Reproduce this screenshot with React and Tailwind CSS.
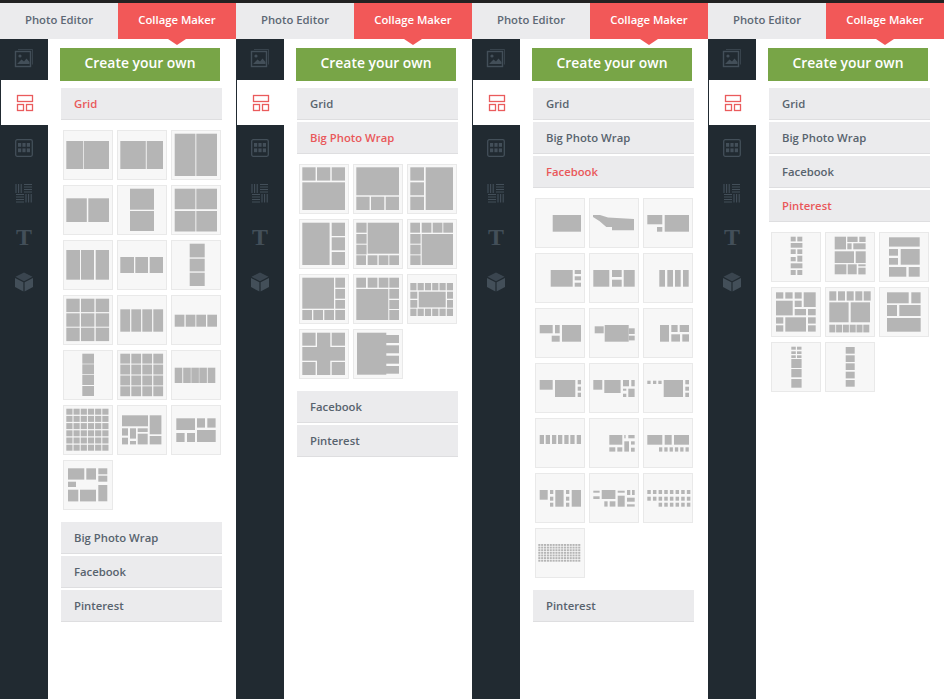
import React from 'react';

const range = (n) => Array.from({ length: n }, (_, i) => i);
const cells = (xs, ys, w, h) => ys.flatMap((y) => xs.map((x) => [x, y, w, h]));

// each layout is a list of [x, y, w, h] tiles in a 50x50 box, a string is a polygon
const gridLayouts = [
  [[3.3, 11, 17, 28], [21, 11, 25, 28]],
  [[3.3, 11, 25.5, 28], [29.7, 11, 16.3, 28]],
  [[3.7, 3.7, 20.7, 42.3], [25.3, 3.7, 20.7, 42.3]],
  [[3.3, 13.3, 20.5, 23.7], [25.3, 13.3, 20.7, 23.7]],
  [[13, 3.7, 24, 21], [13, 26, 24, 20]],
  cells([3.7, 25.3], [3.7, 26], 20.7, 20.5),
  [[3.3, 10, 13.7, 29.7], [18, 10, 13, 29.7], [32.7, 10, 13.3, 29.7]],
  [[3.3, 17, 13.7, 16], [18.3, 17, 12.7, 16], [32.7, 17, 13.3, 16]],
  [[18.7, 3.7, 15, 13.7], [18.7, 18.7, 15, 12.7], [18.7, 32.7, 15, 13.3]],
  cells([3.3, 18, 32.7], [3.7, 18.3, 32.7], 13.4, 13.4),
  cells([3.3, 14.3, 25.3, 36.3], [14.3], 9.8, 22.4),
  cells([3.7, 14.7, 25.3, 36.3], [19.7], 9.7, 12),
  cells([19.3], [3.7, 14.3, 25, 36], 11.7, 10),
  cells([3.3, 14.3, 25.3, 36.3], [3.7, 14.6, 25.5, 36.3], 9.8, 9.9),
  cells([3.7, 12.2, 20.3, 28.3, 36.7], [17.7], 7.6, 15.3),
  cells(range(6).map((i) => 3.3 + i * 7.2), range(6).map((i) => 3.7 + i * 7.2), 6.2, 6),
  [[5, 10.3, 26, 11], [32.7, 10.3, 11.7, 19], [5, 23.3, 6, 7.3], [13, 23.3, 6, 10.3], [20.7, 23.3, 10, 3.7], [20.7, 28.7, 10, 10.7], [32.7, 31, 11.7, 8.4], [5, 32.7, 6, 6.7], [13, 36, 6, 3.4]],
  [[5.3, 13.3, 18.7, 11.7], [26, 13.3, 8, 9.3], [36.3, 13.3, 8.3, 9.3], [5.3, 28, 8.3, 9], [16, 28, 8, 9], [26, 25, 18.7, 12]],
  [[5, 8.3, 16.3, 11.3], [23.3, 8.3, 9.7, 11.3], [35.3, 8.3, 9, 6], [35.3, 15.7, 9, 6], [5, 21.7, 8, 5.3], [5, 29.7, 10.3, 11.7], [17, 29.7, 16, 11.7], [35.3, 25, 9, 16.3]],
];

const bigPhotoLayouts = [
  [[3.3, 3.3, 13.3, 13.3], [18, 3.3, 13.3, 13.3], [32.7, 3.3, 13.3, 13.3], [3.3, 18.3, 42.7, 27.7]],
  [[3.3, 3.3, 42.7, 28], [3.3, 32.7, 13.3, 13.3], [18, 32.7, 13.3, 13.3], [32.7, 32.7, 13.3, 13.3]],
  [[3.3, 3.3, 13.7, 13.3], [3.3, 18.3, 13.7, 13], [3.3, 32.7, 13.7, 13.3], [18.7, 3.3, 27.3, 42.7]],
  [[3.3, 3.7, 27.3, 42.3], [32.7, 3.7, 13.3, 13.3], [32.7, 18.3, 13.3, 13], [32.7, 33, 13.3, 13]],
  [[3.3, 3.7, 10.3, 10], [3.3, 15, 10.3, 9.7], [3.3, 25.7, 10.3, 9.7], [14.7, 3.7, 31.3, 31], ...cells([3.3, 14.7, 25.7, 36.3], [36.3], 9.7, 9.7)],
  [...cells([3.3, 14.7, 25.7, 36.3], [3.7], 9.7, 10), [3.3, 15, 10.3, 9.7], [3.3, 25.7, 10.3, 9.7], [3.3, 36.3, 10.3, 9.7], [14.7, 15, 31.3, 31]],
  [[3.3, 3.7, 31.7, 31], [36.3, 3.7, 9.7, 10], [36.3, 15, 9.7, 9.7], [36.3, 26, 9.7, 8.7], ...cells([3.3, 14.3, 25.3, 36.3], [36], 9.7, 10)],
  [...cells([3.3, 14.7, 25.7, 36.3], [3.7], 9.7, 10), [36.3, 15, 9.7, 9.7], [36.3, 26, 9.7, 9], [36.3, 36, 9.7, 10], [3.3, 15, 32, 31]],
  [...cells(range(6).map((i) => 3.3 + i * 7.3), [9, 34.7], 6.2, 7.3), [3.3, 17.7, 7, 7], [3.3, 26, 7, 7.7], [11.7, 17.7, 27, 15.7], [40, 17.7, 6, 7], [40, 26, 6, 7.7]],
  [[3.3, 3.7, 13.3, 13], [32.7, 3.7, 13.3, 13], [3.3, 33, 13.3, 13], [32.7, 33, 13.3, 13], [18, 3.7, 13.3, 42.3], [3.3, 18, 42.7, 13.7]],
  [[4, 3.7, 29.3, 42], [33, 6, 13, 8], [33, 16.3, 13, 8], [33, 26.7, 13, 8], [33, 37, 13, 7.7]],
];

const facebookLayouts = [
  [[17.7, 17, 28.3, 16.7]],
  ['4,17 11,17 19,19.5 45,21 45,32.3 23,32.3 23,29 17.3,29 10.7,23.3 4,19'],
  [[4.3, 17, 15, 9.3], [21.7, 17, 24.3, 16.7], [14, 29, 5.3, 4.7]],
  [[15.7, 17, 22, 16.7], [39.7, 17, 6.3, 4], [39.7, 23.3, 6.3, 4], [39.7, 29.7, 6.3, 4]],
  [[4.3, 17, 16, 16.7], [23, 17, 9.7, 7], [23, 26.7, 9.7, 7], [34.7, 17, 11, 16.7]],
  cells([16.3, 24.3, 32, 40], [17], 5.7, 16.7),
  [[4.7, 17, 13, 8.3], [20, 17, 4.7, 8.3], [16.7, 27.7, 8, 6], [27, 17, 19, 16.7]],
  [[5.7, 18.3, 9, 7], [15.7, 17, 24, 16.7], [39.7, 20.3, 6, 5.7], [39.7, 27.7, 6, 4.7]],
  [[17, 17, 9, 16.7], [28.3, 17, 6.3, 7], [36.7, 17, 9.3, 7], [28.3, 26.3, 8.7, 7.3], [39.3, 26.3, 6.7, 7.3]],
  [[4.7, 17, 13, 9.7], [20, 17, 20.3, 17], [42.7, 17, 3.3, 4.3], [42.7, 23.7, 3.3, 4], [42.7, 29.7, 3.3, 4.3]],
  [[4.3, 17, 9, 9.7], [15.3, 17, 16.3, 13], [34, 17, 6, 6.3], [42.3, 17, 3.4, 6.3], [34, 25.7, 3.3, 2], [34, 30.7, 3.3, 3.3], [39.3, 25.7, 6.3, 8.3]],
  [[4.3, 17.7, 3.3, 3.3], [10, 17.7, 3.3, 3.3], [15.3, 17.7, 3.3, 3.3], [20.7, 17, 19.3, 17], [42.3, 17, 3.7, 4.3], [42.3, 23.7, 3.7, 4], [42.3, 29.7, 3.7, 4.3]],
  cells([4.7, 10.7, 17, 23, 29.3, 35.3, 41.7], [17], 4.3, 9),
  [[20.3, 17, 13, 9.7], [35.3, 17, 1.3, 3.3], [39.3, 17, 6.3, 3.3], [35.3, 23.3, 4.7, 10.3], [42, 23.3, 3.7, 3.3], [42, 29.7, 3.7, 4], [20.3, 29.3, 6, 4.3], [28.3, 29.3, 5, 4.3]],
  [[4.3, 17, 15, 9.7], [21.7, 17, 7, 9.7], [31, 17, 15, 9.7], ...cells([16, 21.3, 26.6, 31.9, 37.2, 42.5], [29.3], 3.3, 4.3)],
  [[4.7, 17, 8, 9.7], ...cells([15, 31], [17, 23.7, 29.7], 3.3, 4), [20.3, 17, 8.3, 16.7], [36.7, 17, 9.3, 16.7]],
  [[4.3, 17.7, 6.3, 2], [4.3, 23.3, 6.3, 2.7], [12.7, 17, 13.7, 9], [15.3, 28.3, 3.3, 5.3], [20.7, 28.3, 5.7, 5.3], [28.7, 22.7, 7, 11], [28.7, 17.7, 7, 2], [38, 17, 3.3, 5], [43, 17, 2.7, 5], [38, 24.7, 7.7, 4], [38, 31.3, 7.7, 2.3]],
  [...cells(range(8).map((i) => 4.3 + i * 5.65), [17, 23.7], 3.5, 4), ...cells(range(6).map((i) => 15.6 + i * 5.65), [29.7], 3.5, 4)],
  cells(range(15).map((i) => 3.3 + i * 2.85), range(7).map((i) => 16 + i * 2.63), 2.1, 1.9),
];

const pinterestLayouts = [
  [...cells([19.7, 26.3], [4.7, 17.3], 5, 4.7), [19.7, 11, 11.7, 4.7], [19.7, 25, 5, 4.3], [26.3, 23.7, 5, 6], [19.7, 31.3, 11.7, 5], ...cells([19.7, 26.3], [38], 5, 5)],
  [[9.7, 4.7, 11.3, 12.7], [22.3, 4.7, 10.3, 5.3], [34.3, 4.7, 6.3, 5.3], [22.3, 11.3, 4.3, 6], [28.3, 11.3, 12.3, 6], [9.7, 19.3, 19.3, 11.7], [30.7, 19.3, 10, 11.7], [9.7, 32.3, 11.7, 10], [22.7, 32.3, 9, 10], [33.3, 32.3, 7.3, 2], [33.3, 35.7, 7.3, 6.7]],
  [[10, 5.3, 30.7, 9.3], [10, 17, 9, 6.7], [10, 26, 9, 6.7], [21.7, 17, 19, 15.7], [10, 35, 17.3, 9.7], [29.7, 35, 11, 9.7]],
  [[5, 5.3, 7.3, 6.3], [14.3, 5.3, 7.3, 6.3], [23.7, 5.3, 7, 6.3], [32.7, 5.3, 12, 14.7], [5, 13.7, 16.7, 14.7], [23.7, 13.7, 7, 6.3], [23.7, 22, 11.3, 6.3], [37, 22, 7.7, 6.3], [5, 30.3, 7.3, 6.3], [5, 38.3, 7.3, 6.3], [14.3, 30.3, 20.7, 14.3], [37, 30.3, 7.7, 6.3], [37, 38.3, 7.7, 6.3]],
  [...cells([4.3, 13, 21.7, 30.3, 38.7], [4.3], 7, 9.3), [4.3, 15.3, 19.3, 20], [25.7, 15.3, 19.3, 20], ...cells([4.3, 11.1, 17.9, 24.7, 31.5, 38.3], [37.7], 6, 7.7)],
  [[8, 5.3, 21.7, 11], [32.3, 5.3, 9.3, 11], [8, 18, 10, 11], [20.3, 18, 21.3, 11], [8, 31, 33.7, 13.7]],
  [...cells([20.3, 26], [4.7], 4.5, 3), ...cells([20.3, 26], [9.3, 13.3], 4.5, 2.7), [20.3, 17, 10.3, 9], [20.3, 27, 10.3, 8.3], [20.3, 37, 10.3, 8.7]],
  cells([20.7], [5, 13.3, 21.3, 29.7, 38], 9, 6.7),
];

const sections = [
  { name: 'Grid', layouts: gridLayouts },
  { name: 'Big Photo Wrap', layouts: bigPhotoLayouts },
  { name: 'Facebook', layouts: facebookLayouts },
  { name: 'Pinterest', layouts: pinterestLayouts },
];

function Thumb({ tiles }) {
  return (
    <div className="w-[50px] h-[50px] bg-[#f7f7f7] border border-[#e9e9e9] box-border">
      <svg viewBox="1 1 48 48" className="block w-[48px] h-[48px]" fill="#b5b5b5">
        {tiles.map((t, i) =>
          typeof t === 'string'
            ? <polygon key={i} points={t} />
            : <rect key={i} x={t[0]} y={t[1]} width={t[2]} height={t[3]} />
        )}
      </svg>
    </div>
  );
}

function SidebarIcon({ kind, active }) {
  const color = active ? '#ea5b5c' : '#434f59';
  if (kind === 'text') {
    return <span className="text-[24px] leading-none font-bold text-[#434f59] [font-family:'Liberation_Serif',serif]">T</span>;
  }
  return (
    <svg viewBox="0 0 20 20" className="w-[20px] h-[20px]" fill="none" stroke={color}>
      {kind === 'photos' && (
        <>
          <path d="M4 1.5h14.5v15" strokeOpacity="0.7" />
          <rect x="1.5" y="3.5" width="15" height="15" strokeWidth="1.4" />
          <circle cx="6" cy="8" r="1.6" fill={color} stroke="none" />
          <path d="M3 16l4.5-4.5 2.5 2 2.5-3 3 3.5v2z" fill={color} stroke="none" />
        </>
      )}
      {kind === 'layout' && (
        <g strokeWidth="1.3">
          <rect x="2.5" y="2.5" width="15" height="6" />
          <rect x="2.5" y="11.5" width="6" height="6" />
          <rect x="11.5" y="11.5" width="6" height="6" />
        </g>
      )}
      {kind === 'grid' && (
        <>
          <rect x="1.7" y="1.7" width="16.6" height="16.6" rx="1.5" strokeWidth="1.3" />
          <g fill={color} stroke="none">
            {cells([4, 8.4, 12.8], [5, 10.4], 3.2, 3.8).map((c, i) => (
              <rect key={i} x={c[0]} y={c[1]} width={c[2]} height={c[3]} />
            ))}
          </g>
        </>
      )}
      {kind === 'pattern' && (
        <path strokeWidth="1.1" d="M2 1v9M4.6 1v9M7.2 1v9M10 1.5h8M10 4h8M10 6.5h8M10 9h8M2 11.5h8M2 14h8M2 16.5h8M2 19h8M12 11v8.5M14.6 11v8.5M17.2 11v8.5" />
      )}
      {kind === 'box' && (
        <g stroke="none" fill={color}>
          <path d="M10 0.5l8.5 4.3-8.5 4.4-8.5-4.4z" fillOpacity="0.75" />
          <path d="M1 6l8.4 4.3v9.2l-8.4-4.4z" />
          <path d="M19 6l-8.4 4.3v9.2l8.4-4.4z" />
        </g>
      )}
    </svg>
  );
}

const sidebarItems = [
  { kind: 'photos', h: 'h-[41px] pb-[3px]' },
  { kind: 'layout', h: 'h-[45px]', active: true },
  { kind: 'grid', h: 'h-[45px] pt-[1px]' },
  { kind: 'pattern', h: 'h-[44px] pt-[2px]' },
  { kind: 'text', h: 'h-[44px] pt-[2px]' },
  { kind: 'box', h: 'h-[46px] pt-[2px]' },
];

function Row({ label, active }) {
  return (
    <div className={`h-[32px] w-[161px] pl-[13px] pt-[1px] flex items-center bg-[#ebebed] border-b border-[#dedee0] text-[11.3px] font-semibold ${active ? 'text-[#e9585a]' : 'text-[#58636e]'}`}>
      {label}
    </div>
  );
}

function Panel({ open }) {
  return (
    <div className="w-[236px] h-[699px] flex flex-col shrink-0 bg-white">
      <div className="h-[3px] bg-[#222]" />
      <div className="flex h-[36px] relative text-[11.3px] font-semibold">
        <div className="w-[118px] pb-[1px] flex items-center justify-center bg-[#ebebed] text-[#5d6874]">Photo Editor</div>
        <div className="w-[118px] pb-[1px] flex items-center justify-center bg-[#f25858] text-white">Collage Maker</div>
        <div className="absolute left-[168px] top-[36px] w-0 h-0 border-x-[9px] border-x-transparent border-t-[6px] border-t-[#f25858]" />
      </div>
      <div className="flex flex-1">
        <div className="w-[48px] bg-[#212a31] flex flex-col">
          {sidebarItems.map((item) => (
            <div
              key={item.kind}
              className={`${item.h} flex items-center justify-center ${item.active ? 'bg-white ml-[1px]' : ''}`}
            >
              <SidebarIcon kind={item.kind} active={item.active} />
            </div>
          ))}
        </div>
        <div className="flex-1 pt-[9px] pl-[12px]">
          <div className="w-[160px] h-[33px] pb-[3px] bg-[#78a547] text-white text-[13.9px] font-semibold flex items-center justify-center">
            Create your own
          </div>
          <div className="mt-[7px] ml-[1px] flex flex-col gap-[2px]">
            {sections.map((s, i) => (
              <React.Fragment key={s.name}>
                <Row label={s.name} active={i === open} />
                {i === open && (
                  <div className="grid grid-cols-[50px_50px_50px] gap-x-[4px] gap-y-[5px] pl-[2px] pt-[8px] pb-[10px]">
                    {s.layouts.map((tiles, j) => <Thumb key={j} tiles={tiles} />)}
                  </div>
                )}
              </React.Fragment>
            ))}
          </div>
        </div>
      </div>
    </div>
  );
}

export default function App() {
  return (
    <div className="flex w-[944px] h-[699px] overflow-hidden [font-family:'Open_Sans',sans-serif]">
      {sections.map((s, i) => <Panel key={s.name} open={i} />)}
    </div>
  );
}
